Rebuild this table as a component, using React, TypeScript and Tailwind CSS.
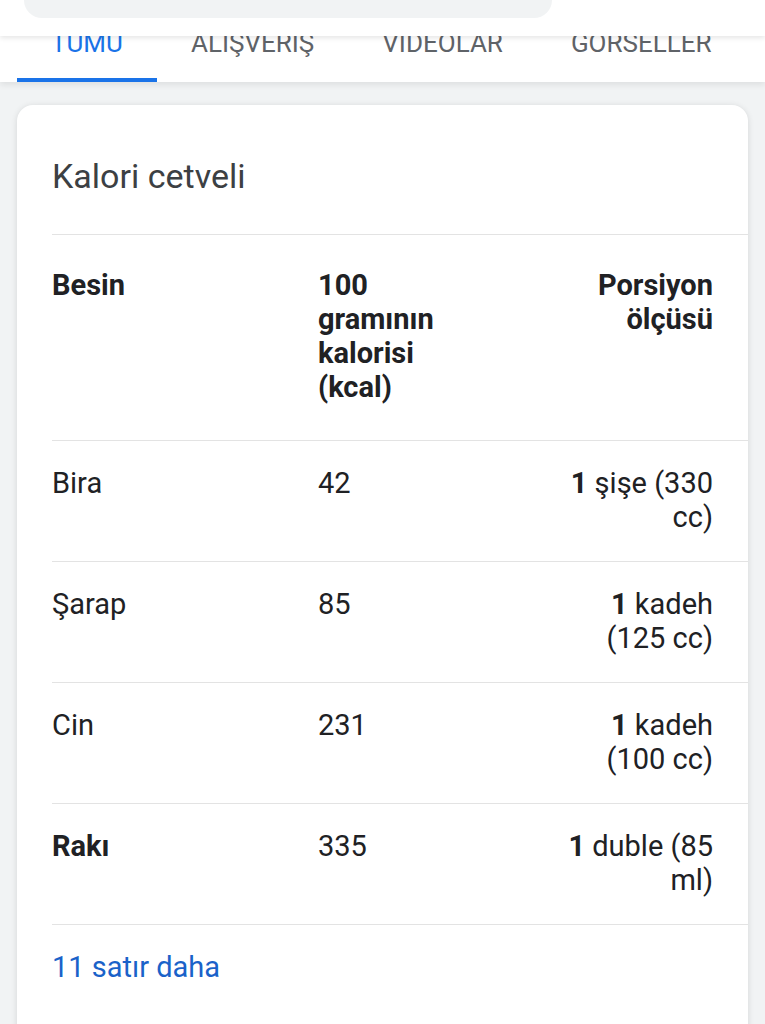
import React from 'react';

interface Row {
  name: string;
  bold?: boolean;
  kcal: string;
  amount: string;
  unit: string;
}

const rows: Row[] = [
  { name: 'Bira', kcal: '42', amount: '1', unit: 'şişe (330 cc)' },
  { name: 'Şarap', kcal: '85', amount: '1', unit: 'kadeh (125 cc)' },
  { name: 'Cin', kcal: '231', amount: '1', unit: 'kadeh (100 cc)' },
  { name: 'Rakı', bold: true, kcal: '335', amount: '1', unit: 'duble (85 ml)' }
];

const tabs = ['TÜMÜ', 'ALIŞVERİŞ', 'VIDEOLAR', 'GÖRSELLER'];

export default function App() {
  return (
    <div className="w-[765px] h-[1024px] overflow-hidden bg-[#f1f3f4] font-['Roboto',sans-serif]">
      {/* Search header (scrolled) */}
      <div className="relative z-20 h-[36px] bg-white shadow-[0_2px_5px_rgba(0,0,0,0.10)]">
        <div className="ml-[24px] w-[528px] h-[18px] rounded-b-[26px] bg-[#f1f3f4]" />
      </div>

      {/* Tabs */}
      <div className="relative z-10 flex h-[46px] overflow-hidden bg-white pl-[17px] shadow-[0_3px_6px_rgba(0,0,0,0.08)]">
        {tabs.map((tab, i) => (
          <div
            key={tab}
            className={
              i === 0
                ? 'h-full px-[34px] border-b-[4px] border-[#1a73e8] text-[#1a73e8]'
                : 'h-full px-[34px] text-[#5f6368]'
            }
          >
            <span className="block -mt-[6px] text-[26px] leading-[26px] whitespace-nowrap">{tab}</span>
          </div>
        ))}
      </div>

      {/* Card */}
      <div className="mx-[17px] mt-[23px] rounded-[16px] bg-white pl-[35px] shadow-[0_1px_6px_rgba(0,0,0,0.12)]">
        <h2 className="pt-[51px] pb-[38px] text-[34px] leading-[40px] text-[#3c4043]">Kalori cetveli</h2>

        <div className="text-[29px] leading-[34px] text-[#202124]">
          <div className="grid grid-cols-[266px_1fr_152px] border-t border-[#e3e3e3] pt-[33px] pb-[36px] pr-[35px] font-bold">
            <div>Besin</div>
            <div className="max-w-[160px]">100 gramının kalorisi (kcal)</div>
            <div className="text-right">Porsiyon ölçüsü</div>
          </div>

          {rows.map((row) => (
            <div
              key={row.name}
              className="grid grid-cols-[266px_1fr_152px] border-t border-[#e3e3e3] pt-[25px] pb-[27px] pr-[35px]"
            >
              <div className={row.bold ? 'font-bold' : ''}>{row.name}</div>
              <div>{row.kcal}</div>
              <div className="text-right">
                <span className="font-bold">{row.amount}</span> {row.unit}
              </div>
            </div>
          ))}

          <div className="border-t border-[#e3e3e3] pt-[25px] pb-[80px]">
            <a className="text-[#1a62c9]">11 satır daha</a>
          </div>
        </div>
      </div>
    </div>
  );
}
